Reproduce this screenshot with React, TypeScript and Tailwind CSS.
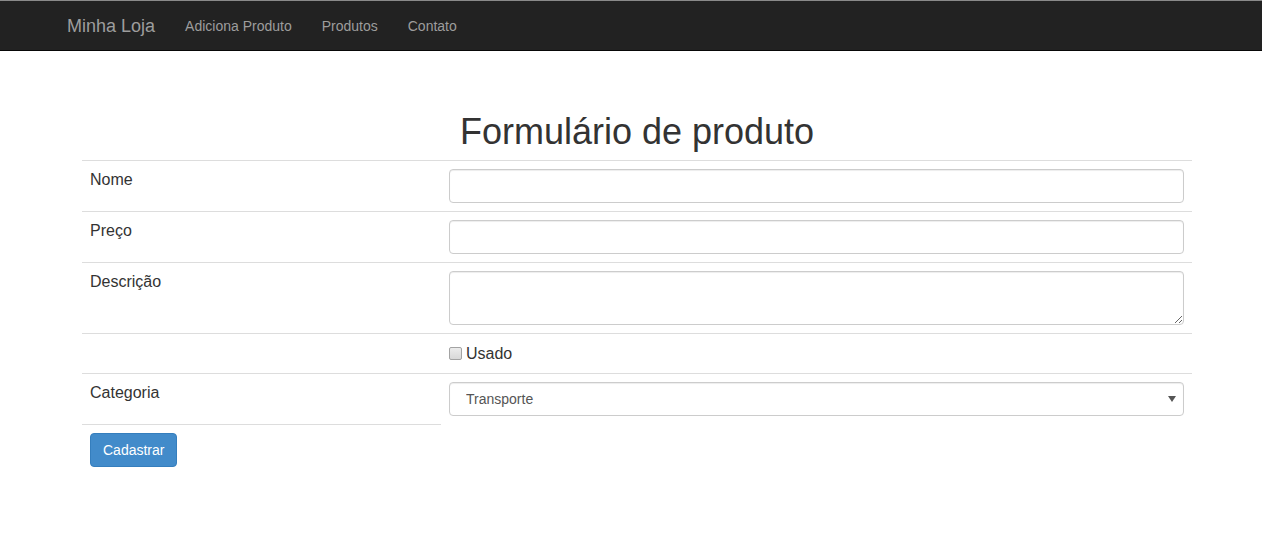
import React from "react";

const font = { fontFamily: '"Liberation Sans", Arial, sans-serif' };

// Bootstrap-ish form control
const inputCls =
  "block w-full h-[34px] rounded-[4px] border border-[#ccc] bg-white px-3 text-[14px] text-[#555] shadow-[inset_0_1px_1px_rgba(0,0,0,0.075)] outline-none";

const cell = "border-t border-[#ddd] p-2 align-top";

export default function App() {
  const [usado, setUsado] = React.useState(false);

  return (
    <div className="min-h-[542px] bg-white text-[#333]" style={font}>
      {/* navbar */}
      <nav className="h-[51px] bg-[#222] border-t border-t-[#8a8a8a] border-b border-b-[#080808]">
        <div className="ml-[52px] w-[1170px] px-[15px] flex items-center h-[49px]">
          <a className="text-[18px] text-[#9d9d9d] pr-[15px] leading-[20px]">Minha Loja</a>
          <ul className="flex">
            {["Adiciona Produto", "Produtos", "Contato"].map((l) => (
              <li key={l}>
                <a className="block px-[15px] text-[14px] text-[#9d9d9d] leading-[20px]">{l}</a>
              </li>
            ))}
          </ul>
        </div>
      </nav>

      <div className="ml-[82px] w-[1110px]">
        <h1 className="mt-[61px] mb-[8px] text-center text-[36px] leading-[1.1] font-normal text-[#333]">
          Formulário de produto
        </h1>

        <table className="w-full border-collapse text-[16px] leading-[21px]">
          <colgroup>
            <col className="w-[359px]" />
            <col />
          </colgroup>
          <tbody>
            <tr>
              <td className={cell}>Nome</td>
              <td className={cell}>
                <input type="text" className={inputCls} />
              </td>
            </tr>
            <tr>
              <td className={cell}>Preço</td>
              <td className={cell}>
                <input type="text" className={inputCls} />
              </td>
            </tr>
            <tr>
              <td className={cell}>Descrição</td>
              <td className={cell}>
                <textarea className="block w-full h-[54px] rounded-[4px] border border-[#ccc] bg-white px-3 py-1.5 text-[14px] text-[#555] shadow-[inset_0_1px_1px_rgba(0,0,0,0.075)] outline-none" />
              </td>
            </tr>
            <tr>
              <td className={cell}></td>
              <td className={cell}>
                <label className="flex items-center h-[23px]">
                  <input
                    type="checkbox"
                    checked={usado}
                    onChange={(e) => setUsado(e.target.checked)}
                    className="m-0 w-[13px] h-[13px] appearance-none rounded-[2px] border border-[#a3a3a3] bg-gradient-to-b from-[#ececec] to-[#d8d8d8] checked:bg-[#428bca]"
                  />
                  <span className="ml-[4px]">Usado</span>
                </label>
              </td>
            </tr>
            <tr>
              <td className={cell + " pb-[9px]"}>Categoria</td>
              <td className={cell + " pb-[9px]"}>
                <div className="relative h-[34px]">
                  <select className={inputCls + " h-full appearance-none pl-[16px] pt-px"} defaultValue="Transporte">
                    <option>Transporte</option>
                    <option>Eletrônicos</option>
                    <option>Livros</option>
                  </select>
                  {/* arrow */}
                  <svg className="absolute right-[8px] top-[14px]" width="8" height="6" viewBox="0 0 8 6">
                    <path d="M0 0h8L4 6z" fill="#555" />
                  </svg>
                </div>
              </td>
            </tr>
            <tr>
              <td className={cell}>
                <button className="block h-[34px] px-3 rounded-[4px] border border-[#357ebd] bg-[#428bca] text-white text-[14px] leading-[20px]">
                  Cadastrar
                </button>
              </td>
              <td></td>
            </tr>
          </tbody>
        </table>
      </div>
    </div>
  );
}
